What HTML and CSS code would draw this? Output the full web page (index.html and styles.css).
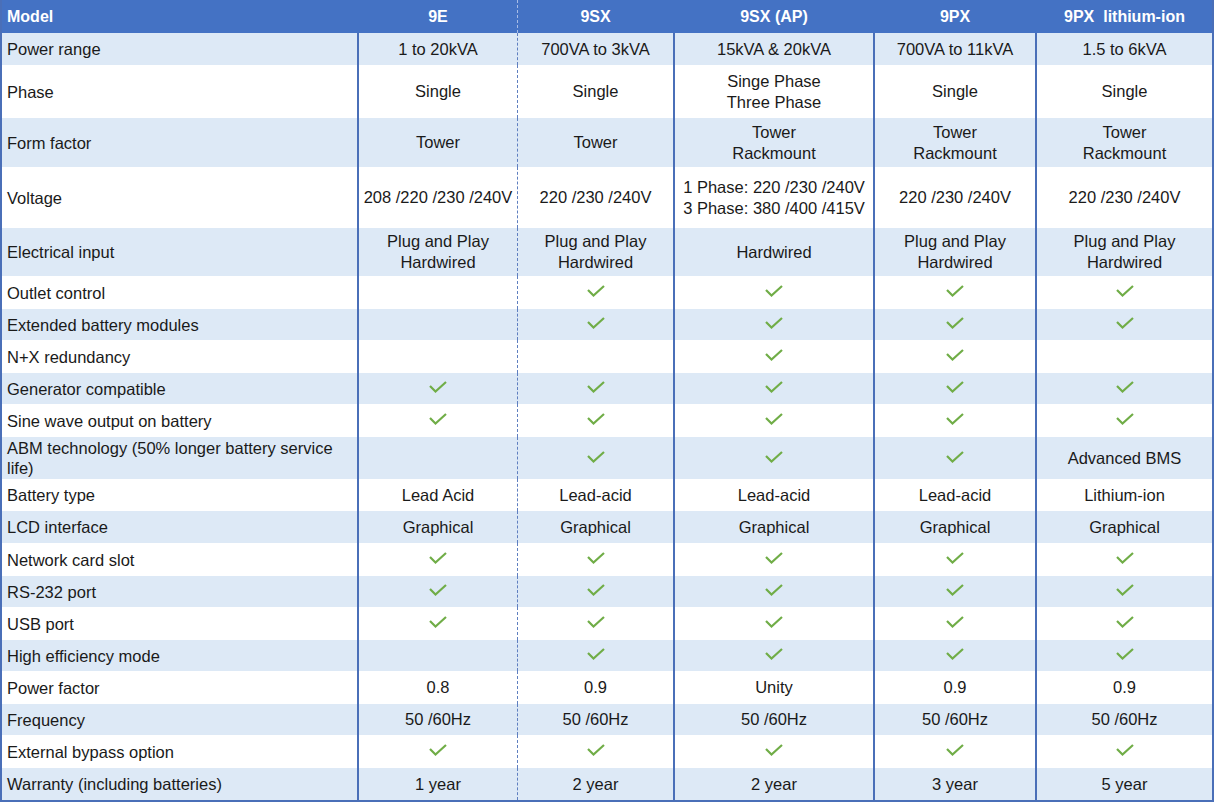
FILE: index.html
```html
<!DOCTYPE html>
<html lang="en">
<head>
<meta charset="utf-8">
<title>UPS comparison</title>
<link rel="stylesheet" href="styles.css">
</head>
<body>
<svg width="0" height="0" class="defs">
  <symbol id="ck" viewBox="0 0 18 12"><polyline points="1,5 6.5,10.5 17,1" fill="none" stroke="#70AD47" stroke-width="2.2"/></symbol>
</svg>
<div class="table">
  <div class="row head">
    <div class="c c1">Model</div><div class="c">9E</div><div class="c c3">9SX</div><div class="c">9SX (AP)</div><div class="c">9PX</div><div class="c">9PX&nbsp; lithium-ion</div>
  </div>
  <div class="row alt h32">
    <div class="c c1">Power range</div><div class="c">1 to 20kVA</div><div class="c c3">700VA to 3kVA</div><div class="c">15kVA &amp; 20kVA</div><div class="c">700VA to 11kVA</div><div class="c">1.5 to 6kVA</div>
  </div>
  <div class="row h53">
    <div class="c c1">Phase</div><div class="c">Single</div><div class="c c3">Single</div><div class="c">Singe Phase<br>Three Phase</div><div class="c">Single</div><div class="c">Single</div>
  </div>
  <div class="row alt h49">
    <div class="c c1">Form factor</div><div class="c">Tower</div><div class="c c3">Tower</div><div class="c">Tower<br>Rackmount</div><div class="c">Tower<br>Rackmount</div><div class="c">Tower<br>Rackmount</div>
  </div>
  <div class="row h61">
    <div class="c c1">Voltage</div><div class="c">208 /220 /230 /240V</div><div class="c c3">220 /230 /240V</div><div class="c">1 Phase: 220 /230 /240V<br>3 Phase: 380 /400 /415V</div><div class="c">220 /230 /240V</div><div class="c">220 /230 /240V</div>
  </div>
  <div class="row alt h48">
    <div class="c c1">Electrical input</div><div class="c">Plug and Play<br>Hardwired</div><div class="c c3">Plug and Play<br>Hardwired</div><div class="c">Hardwired</div><div class="c">Plug and Play<br>Hardwired</div><div class="c">Plug and Play<br>Hardwired</div>
  </div>
  <div class="row h33">
    <div class="c c1">Outlet control</div><div class="c"></div><div class="c c3"><svg class="check"><use href="#ck"/></svg></div><div class="c"><svg class="check"><use href="#ck"/></svg></div><div class="c"><svg class="check"><use href="#ck"/></svg></div><div class="c"><svg class="check"><use href="#ck"/></svg></div>
  </div>
  <div class="row alt h31">
    <div class="c c1">Extended battery modules</div><div class="c"></div><div class="c c3"><svg class="check"><use href="#ck"/></svg></div><div class="c"><svg class="check"><use href="#ck"/></svg></div><div class="c"><svg class="check"><use href="#ck"/></svg></div><div class="c"><svg class="check"><use href="#ck"/></svg></div>
  </div>
  <div class="row h33">
    <div class="c c1">N+X redundancy</div><div class="c"></div><div class="c c3"></div><div class="c"><svg class="check"><use href="#ck"/></svg></div><div class="c"><svg class="check"><use href="#ck"/></svg></div><div class="c"></div>
  </div>
  <div class="row alt h31">
    <div class="c c1">Generator compatible</div><div class="c"><svg class="check"><use href="#ck"/></svg></div><div class="c c3"><svg class="check"><use href="#ck"/></svg></div><div class="c"><svg class="check"><use href="#ck"/></svg></div><div class="c"><svg class="check"><use href="#ck"/></svg></div><div class="c"><svg class="check"><use href="#ck"/></svg></div>
  </div>
  <div class="row h33">
    <div class="c c1">Sine wave output on battery</div><div class="c"><svg class="check"><use href="#ck"/></svg></div><div class="c c3"><svg class="check"><use href="#ck"/></svg></div><div class="c"><svg class="check"><use href="#ck"/></svg></div><div class="c"><svg class="check"><use href="#ck"/></svg></div><div class="c"><svg class="check"><use href="#ck"/></svg></div>
  </div>
  <div class="row alt h42">
    <div class="c c1">ABM technology (50% longer battery service life)</div><div class="c"></div><div class="c c3"><svg class="check"><use href="#ck"/></svg></div><div class="c"><svg class="check"><use href="#ck"/></svg></div><div class="c"><svg class="check"><use href="#ck"/></svg></div><div class="c">Advanced BMS</div>
  </div>
  <div class="row h32">
    <div class="c c1">Battery type</div><div class="c">Lead Acid</div><div class="c c3">Lead-acid</div><div class="c">Lead-acid</div><div class="c">Lead-acid</div><div class="c">Lithium-ion</div>
  </div>
  <div class="row alt h32">
    <div class="c c1">LCD interface</div><div class="c">Graphical</div><div class="c c3">Graphical</div><div class="c">Graphical</div><div class="c">Graphical</div><div class="c">Graphical</div>
  </div>
  <div class="row h33">
    <div class="c c1">Network card slot</div><div class="c"><svg class="check"><use href="#ck"/></svg></div><div class="c c3"><svg class="check"><use href="#ck"/></svg></div><div class="c"><svg class="check"><use href="#ck"/></svg></div><div class="c"><svg class="check"><use href="#ck"/></svg></div><div class="c"><svg class="check"><use href="#ck"/></svg></div>
  </div>
  <div class="row alt h31">
    <div class="c c1">RS-232 port</div><div class="c"><svg class="check"><use href="#ck"/></svg></div><div class="c c3"><svg class="check"><use href="#ck"/></svg></div><div class="c"><svg class="check"><use href="#ck"/></svg></div><div class="c"><svg class="check"><use href="#ck"/></svg></div><div class="c"><svg class="check"><use href="#ck"/></svg></div>
  </div>
  <div class="row h33">
    <div class="c c1">USB port</div><div class="c"><svg class="check"><use href="#ck"/></svg></div><div class="c c3"><svg class="check"><use href="#ck"/></svg></div><div class="c"><svg class="check"><use href="#ck"/></svg></div><div class="c"><svg class="check"><use href="#ck"/></svg></div><div class="c"><svg class="check"><use href="#ck"/></svg></div>
  </div>
  <div class="row alt h31">
    <div class="c c1">High efficiency mode</div><div class="c"></div><div class="c c3"><svg class="check"><use href="#ck"/></svg></div><div class="c"><svg class="check"><use href="#ck"/></svg></div><div class="c"><svg class="check"><use href="#ck"/></svg></div><div class="c"><svg class="check"><use href="#ck"/></svg></div>
  </div>
  <div class="row h33">
    <div class="c c1">Power factor</div><div class="c">0.8</div><div class="c c3">0.9</div><div class="c">Unity</div><div class="c">0.9</div><div class="c">0.9</div>
  </div>
  <div class="row alt h31">
    <div class="c c1">Frequency</div><div class="c">50 /60Hz</div><div class="c c3">50 /60Hz</div><div class="c">50 /60Hz</div><div class="c">50 /60Hz</div><div class="c">50 /60Hz</div>
  </div>
  <div class="row h33">
    <div class="c c1">External bypass option</div><div class="c"><svg class="check"><use href="#ck"/></svg></div><div class="c c3"><svg class="check"><use href="#ck"/></svg></div><div class="c"><svg class="check"><use href="#ck"/></svg></div><div class="c"><svg class="check"><use href="#ck"/></svg></div><div class="c"><svg class="check"><use href="#ck"/></svg></div>
  </div>
  <div class="row alt h32">
    <div class="c c1">Warranty (including batteries)</div><div class="c">1 year</div><div class="c c3">2 year</div><div class="c">2 year</div><div class="c">3 year</div><div class="c">5 year</div>
  </div>
</div>
</body>
</html>
```

FILE: styles.css
```css
html, body {
  margin: 0;
  padding: 0;
  background: #ffffff;
}

.defs {
  position: absolute;
  width: 0;
  height: 0;
  overflow: hidden;
}

.table {
  width: 1214px;
  box-sizing: border-box;
  border-left: 2px solid #4a6fb8;
  border-right: 2px solid #4a6fb8;
  border-bottom: 2px solid #4a6fb8;
  font-family: "Liberation Sans", Arial, sans-serif;
  font-size: 16.5px;
  color: #1a1a1a;
}

.row {
  display: grid;
  grid-template-columns: 355px 160px 156px 200px 162px 177px;
  height: 32px;
  background: #ffffff;
}

.row.alt { background: #dde9f6; }

.head {
  height: 33px;
  background: #4472c4;
  color: #ffffff;
  font-weight: bold;
  font-size: 16px;
}

.h31 { height: 31px; }
.h32 { height: 32px; }
.h33 { height: 33px; }
.h42 { height: 42px; }
.h48 { height: 48px; }
.h49 { height: 49px; }
.h53 { height: 53px; }
.h61 { height: 61px; }

.c {
  box-sizing: border-box;
  display: flex;
  align-items: center;
  justify-content: center;
  text-align: center;
  line-height: 21px;
  border-left: 2px solid #4a6fb8;
  white-space: nowrap;
}

.c.c1 {
  border-left: none;
  justify-content: flex-start;
  text-align: left;
  padding-left: 5px;
  padding-right: 6px;
  line-height: 20px;
  white-space: normal;
}

.c.c3 {
  border-left: 1px dashed #5f7fc0;
}

.head .c {
  border-left-color: transparent;
}

.head .c.c3 {
  border-left: 1px dashed #a9bde6;
}

.check {
  width: 18px;
  height: 12px;
  margin-top: -3px;
}
```
